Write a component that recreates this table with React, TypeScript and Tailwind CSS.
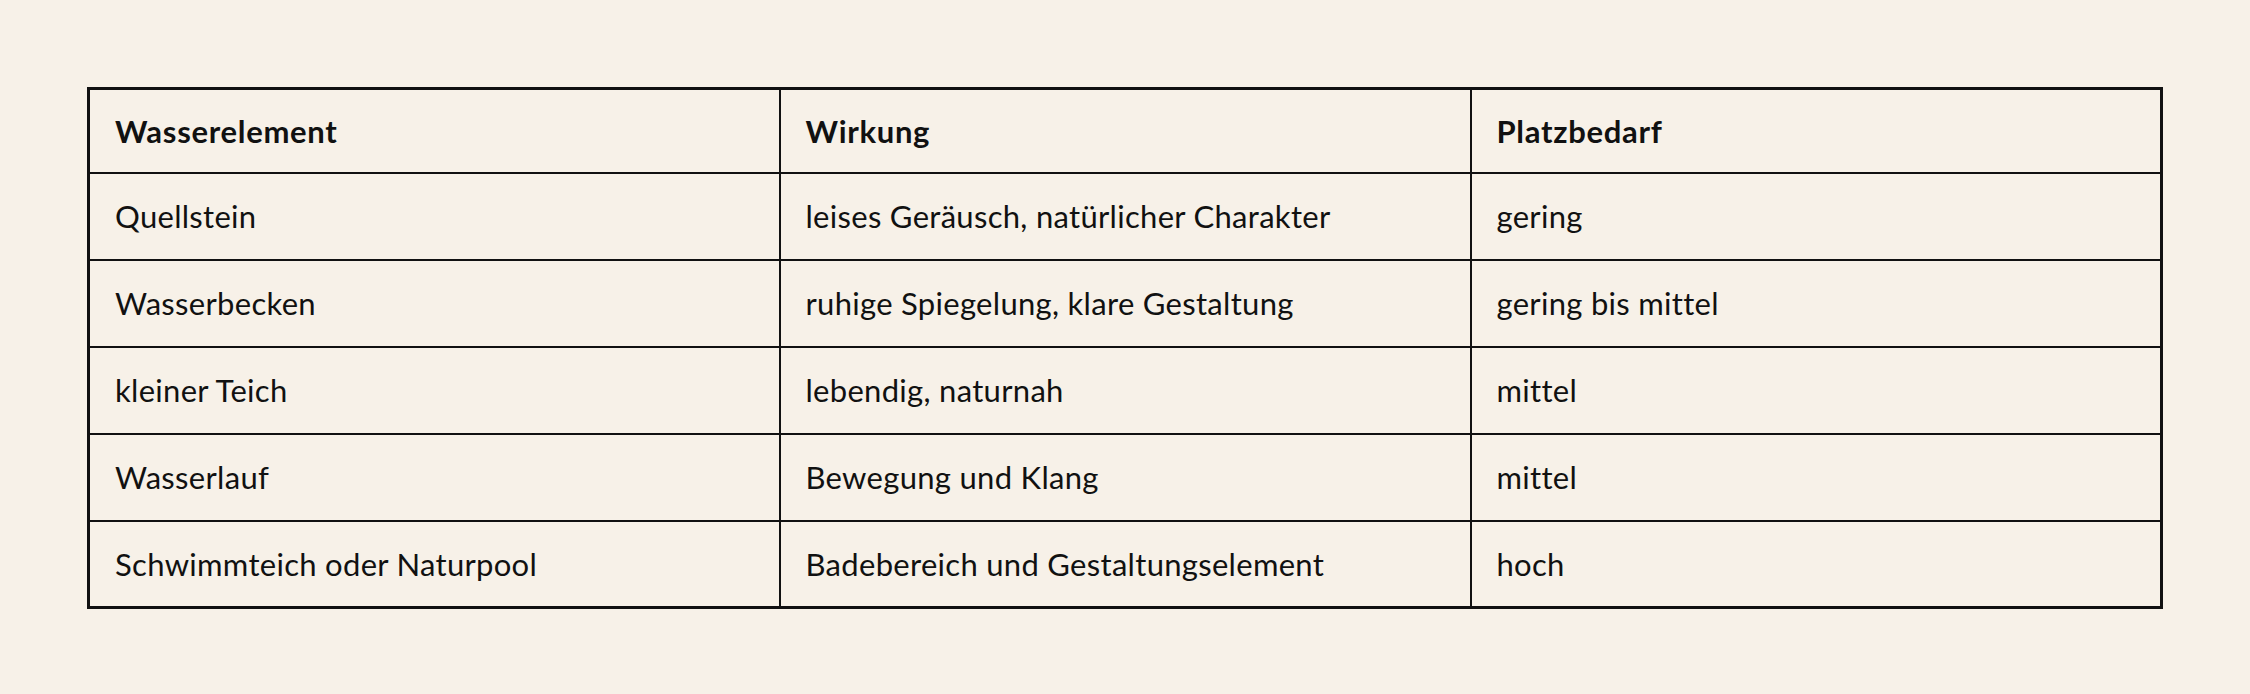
const HEAD = ["Wasserelement", "Wirkung", "Platzbedarf"]

const ROWS = [
  ["Quellstein", "leises Geräusch, natürlicher Charakter", "gering"],
  ["Wasserbecken", "ruhige Spiegelung, klare Gestaltung", "gering bis mittel"],
  ["kleiner Teich", "lebendig, naturnah", "mittel"],
  ["Wasserlauf", "Bewegung und Klang", "mittel"],
  ["Schwimmteich oder Naturpool", "Badebereich und Gestaltungselement", "hoch"],
]

export default function App() {
  return (
    <div className="min-h-[694px] w-full bg-[#f7f1e8] px-[87px] pt-[87px] font-['Lato','Open_Sans',sans-serif] text-[#111]">
      <table className="w-full table-fixed border-collapse border-[3px] border-[#111]">
        <thead>
          <tr className="h-[84px]">
            {HEAD.map((h) => (
              <th key={h} className="border-2 border-[#111] px-[25px] text-left text-[31px] font-bold tracking-[0.7px]">
                {h}
              </th>
            ))}
          </tr>
        </thead>
        <tbody>
          {ROWS.map((row) => (
            <tr key={row[0]} className="h-[87px]">
              {row.map((cell, i) => (
                <td key={i} className="border-2 border-[#111] px-[25px] text-[31px] font-normal tracking-[0.3px]">
                  {cell}
                </td>
              ))}
            </tr>
          ))}
        </tbody>
      </table>
    </div>
  )
}
